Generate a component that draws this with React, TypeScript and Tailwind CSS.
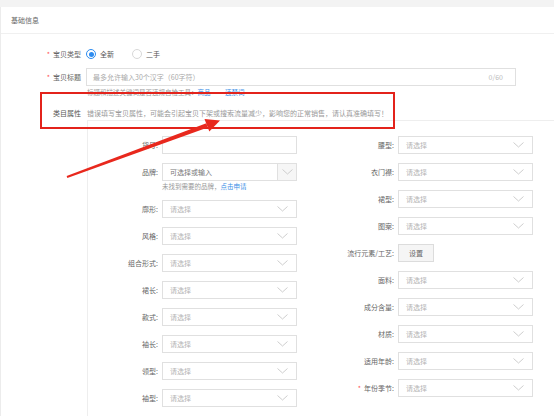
import React from 'react';

const Chevron = () => (
  <svg width="11" height="6" viewBox="0 0 11 6" className="shrink-0">
    <polyline points="0.5,0.5 5.5,5 10.5,0.5" fill="none" stroke="#c8c8c8" strokeWidth="0.9" />
  </svg>
);

const Select: React.FC<{ placeholder?: string }> = ({ placeholder = '请选择' }) => (
  <div className="flex h-[18px] w-[135px] items-center justify-between border border-[#e0e0e0] bg-white pl-[7px] pr-[8px]">
    <span className="text-[#b4b4b4]">{placeholder}</span>
    <Chevron />
  </div>
);

interface AttrRowProps {
  label: string;
  required?: boolean;
  wide?: boolean;
  children: React.ReactNode;
}

// label column is narrower on the left side than on the right side
const AttrRow: React.FC<AttrRowProps> = ({ label, required, wide, children }) => (
  <div className="flex h-[18px] items-center">
    <div className={wide ? 'w-[101px] pr-[4px] text-right text-[#666]' : 'w-[74px] pr-[4px] text-right text-[#666]'}>
      {required && <span className="mr-[3px] text-[#f55]">*</span>}
      {label}:
    </div>
    {children}
  </div>
);

const leftAttrs = ['廓形', '风格', '组合形式', '裙长', '款式', '袖长', '领型', '袖型'];
const rightTop = ['腰型', '衣门襟', '裙型', '图案'];
const rightBottom = ['面料', '成分含量', '材质', '适用年龄'];

export default function App() {
  return (
    <div className="relative h-[419px] w-[554px] overflow-hidden bg-white font-['Noto_Sans_CJK_SC','Noto_Sans',sans-serif] text-[7px] leading-[10px] text-[#555]">
      <div className="h-[7px] bg-[#f3f3f3]" />
      <div className="border-l border-[#ececec]">
        <div className="flex h-[27px] items-center border-b border-[#f0f0f0] pl-[10px] text-[#666]">基础信息</div>

        <div className="pt-[13px]">
          {/* 宝贝类型 */}
          <div className="flex h-[14px] items-center">
            <div className="w-[80px] text-right text-[#666]">
              <span className="mr-[3px] text-[#f55]">*</span>宝贝类型
            </div>
            <div className="ml-[5px] flex items-center">
              <span className="flex h-[10px] w-[10px] items-center justify-center rounded-full border border-[#2d8cf0]">
                <span className="h-[5px] w-[5px] rounded-full bg-[#2d8cf0]" />
              </span>
              <span className="ml-[4px] text-[#555]">全新</span>
              <span className="ml-[18px] h-[10px] w-[10px] rounded-full border border-[#d8d8d8]" />
              <span className="ml-[4px] text-[#555]">二手</span>
            </div>
          </div>

          {/* 宝贝标题 */}
          <div className="mt-[7px] flex h-[18px] items-center">
            <div className="w-[80px] text-right text-[#666]">
              <span className="mr-[3px] text-[#f55]">*</span>宝贝标题
            </div>
            <div className="ml-[5px] flex h-[18px] w-[430px] items-center justify-between border border-[#e0e0e0] pl-[6px] pr-[12px]">
              <span className="text-[#aaa]">最多允许输入30个汉字（60字符）</span>
              <span className="text-[#bbb]">0/60</span>
            </div>
          </div>
          <div className="ml-[86px] mt-[1px] h-[10px] text-[6.5px] text-[#999]">
            标题和描述关键词是否违规自检工具：<span className="text-[#3a8ee6]">商品</span>
            <span className="mx-[4px]">·</span>
            <span className="text-[#3a8ee6]">违禁词</span>
          </div>

          {/* 类目属性 */}
          <div className="mt-[9px] flex h-[14px] items-center">
            <div className="w-[80px] text-right text-[#555]">类目属性</div>
            <div className="ml-[6px] text-[#999]">错误填写宝贝属性，可能会引起宝贝下架或搜索流量减少，影响您的正常销售，请认真准确填写！</div>
          </div>

          {/* attribute panel */}
          <div className="ml-[86px] flex border-l border-t border-[#eeeeee] pb-[9px] pt-[15px]">
            <div className="flex w-[209px] flex-col gap-[9px]">
              <AttrRow label="货号">
                <div className="h-[18px] w-[135px] border border-[#e0e0e0] bg-white" />
              </AttrRow>
              <div>
                <AttrRow label="品牌">
                  <div className="flex h-[18px] w-[135px] items-center border border-[#e0e0e0] bg-white">
                    <span className="flex-1 pl-[7px] text-[#777]">可选择或输入</span>
                    <span className="flex h-full w-[19px] items-center justify-center border-l border-[#e0e0e0] bg-[#f6f6f6]">
                      <Chevron />
                    </span>
                  </div>
                </AttrRow>
                <div className="ml-[74px] flex h-[10px] items-end text-[6.5px] text-[#999]">
                  未找到需要的品牌，<span className="text-[#3a8ee6]">点击申请</span>
                </div>
              </div>
              {leftAttrs.map(l => (
                <AttrRow key={l} label={l}>
                  <Select />
                </AttrRow>
              ))}
            </div>

            <div className="flex flex-col gap-[9px]">
              {rightTop.map(l => (
                <AttrRow key={l} label={l} wide>
                  <Select />
                </AttrRow>
              ))}
              <AttrRow label="流行元素/工艺" wide>
                <div className="flex h-[18px] w-[36px] items-center justify-center border border-[#dcdcdc] bg-[#f5f5f5] text-[#666]">设置</div>
              </AttrRow>
              {rightBottom.map(l => (
                <AttrRow key={l} label={l} wide>
                  <Select />
                </AttrRow>
              ))}
              <AttrRow label="年份季节" required wide>
                <Select />
              </AttrRow>
            </div>
          </div>
        </div>
      </div>

      {/* annotation: red box and arrow */}
      <div className="absolute left-[40px] top-[92px] h-[37px] w-[355px] border-2 border-[#e3231b]" />
      <svg className="pointer-events-none absolute left-0 top-0" width="554" height="419" viewBox="0 0 554 419">
        <polygon points="67.35,177.95 66.65,176.05 206.3,123.3 207.7,127.5" fill="#e8281d" />
        <polygon points="220,120.5 204.5,119 209.3,131.5" fill="#e8281d" />
      </svg>
    </div>
  );
}
